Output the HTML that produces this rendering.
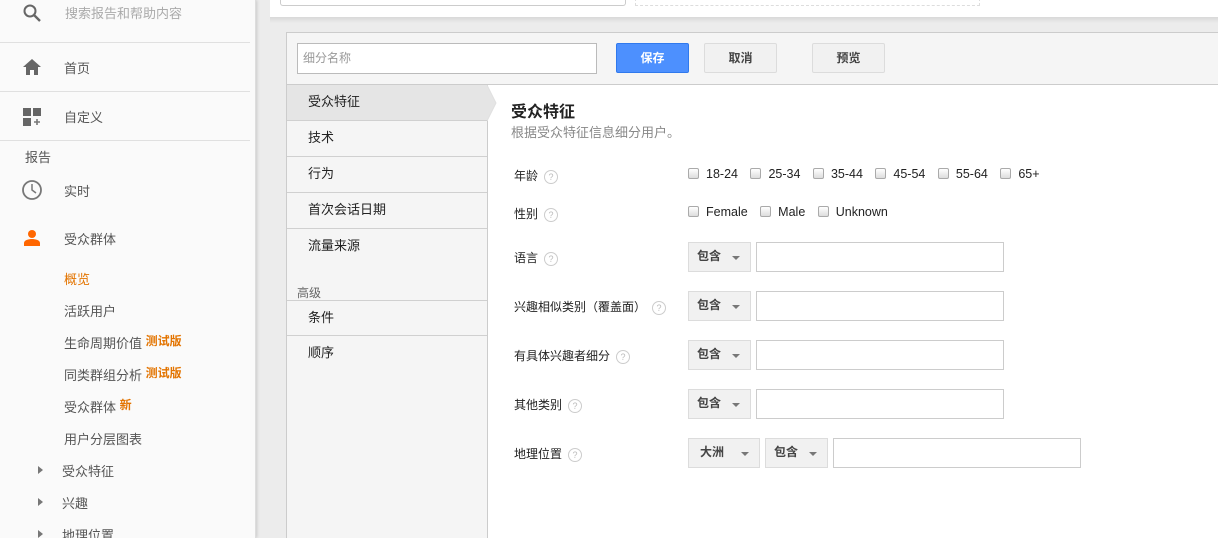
<!DOCTYPE html>
<html style="overflow:hidden;width:1218px;height:538px"><head><meta charset="utf-8"><style>
*{box-sizing:border-box;margin:0;padding:0}
body{width:1218px;height:538px;overflow:hidden;position:relative;background:#ececec;font-family:"Liberation Sans","Noto Sans CJK SC",sans-serif;font-size:13px;color:#222}
.a{position:absolute}
#side{left:0;top:0;width:256px;height:538px;background:#fafafa;border-right:1px solid #ddd;box-shadow:1px 0 3px rgba(0,0,0,.15)}
.sl{position:absolute;color:#555;font-size:13px}
.hr{position:absolute;left:0;width:250px;height:1px;background:#e0e0e0}
.or{color:#e37400;font-weight:bold;font-size:12px}
.tri{position:absolute;left:38px;width:0;height:0;border-left:5px solid #777;border-top:4px solid transparent;border-bottom:4px solid transparent}
#top{left:270px;top:0;width:948px;height:17px;background:#fff}
#panel{left:286px;top:32px;width:940px;height:506px;background:#fff;border:1px solid #ccc;border-bottom:none;overflow:hidden}
#hdr{left:0;top:0;width:940px;height:52px;background:#f5f5f5;border-bottom:1px solid #ccc}
.btn{position:absolute;top:10px;height:30px;border:1px solid #dcdcdc;background:#f1f1f1;font-weight:bold;font-size:12px;text-align:center;line-height:28px;color:#444;border-radius:2px}
#nav{left:0;top:52px;width:201px;height:470px;background:#f5f5f5;border-right:1px solid #ccc}
.ni{position:absolute;left:0;width:200px;height:36px;border-bottom:1px solid #d0d0d0;padding-left:21px;line-height:34px;font-size:13px;color:#222}
.lab{position:absolute;left:227px;font-size:12px;color:#222}
.q{display:inline-block;width:14px;height:14px;border:1px solid #ccc;border-radius:50%;color:#bbb;font-size:9px;text-align:center;line-height:12px;margin-left:6px;vertical-align:middle}
.cb{display:inline-block;width:11px;height:11px;border:1px solid #aaa;border-radius:2px;background:linear-gradient(#fff,#ddd);vertical-align:-1px;margin-right:7px}
.opts{position:absolute;font-size:12.5px;color:#222}
.opts span.t{margin-right:9px}
.dd{position:absolute;height:30px;border:1px solid #dcdcdc;background:#f1f1f1;font-weight:bold;font-size:12px;line-height:26px;padding-left:8px;color:#444}
.dd:after{content:"";position:absolute;right:10px;top:13px;border-left:4px solid transparent;border-right:4px solid transparent;border-top:4px solid #777}
.in{position:absolute;height:30px;border:1px solid #ccc;background:#fff}
</style></head><body>
<div id="side" class="a">
<svg class="a" style="left:22px;top:3px" width="20" height="20" viewBox="0 0 20 20"><circle cx="8" cy="8" r="5.5" fill="none" stroke="#666" stroke-width="2"/><path d="M12 12l6 6" stroke="#666" stroke-width="2.4"/></svg>
<div class="sl" style="left:65px;top:3px;color:#aaa">搜索报告和帮助内容</div>
<div class="hr" style="top:42px"></div>
<svg class="a" style="left:22px;top:58px" width="20" height="18" viewBox="0 0 20 18"><path d="M10 1L1 9h3v8h4v-5h4v5h4V9h3z" fill="#666"/></svg>
<div class="sl" style="left:64px;top:58px">首页</div>
<div class="hr" style="top:91px"></div>
<svg class="a" style="left:22px;top:107px" width="20" height="20" viewBox="0 0 20 20"><rect x="1" y="1" width="8" height="8" fill="#666"/><rect x="11" y="1" width="8" height="8" fill="#666"/><rect x="1" y="11" width="8" height="8" fill="#666"/><path d="M15 12v6M12 15h6" stroke="#777" stroke-width="1.6"/></svg>
<div class="sl" style="left:64px;top:107px">自定义</div>
<div class="hr" style="top:140px"></div>
<div class="sl" style="left:25px;top:147px">报告</div>
<svg class="a" style="left:21px;top:179px" width="22" height="22" viewBox="0 0 22 22"><circle cx="11" cy="11" r="9" fill="none" stroke="#777" stroke-width="1.8"/><path d="M11 5v6l4 3" fill="none" stroke="#777" stroke-width="1.5"/></svg>
<div class="sl" style="left:64px;top:181px">实时</div>
<svg class="a" style="left:23px;top:229px" width="18" height="18" viewBox="0 0 18 18"><circle cx="9" cy="5" r="4" fill="#f60"/><path d="M1 17v-3c0-3 5-4 8-4s8 1 8 4v3z" fill="#f60"/></svg>
<div class="sl" style="left:64px;top:229px">受众群体</div>
<div class="sl" style="left:64px;top:269px;color:#e37400">概览</div>
<div class="sl" style="left:64px;top:301px">活跃用户</div>
<div class="sl" style="left:64px;top:333px">生命周期价值 <span class="or" style="position:relative;top:-3px">测试版</span></div>
<div class="sl" style="left:64px;top:365px">同类群组分析 <span class="or" style="position:relative;top:-3px">测试版</span></div>
<div class="sl" style="left:64px;top:397px">受众群体 <span class="or" style="position:relative;top:-3px">新</span></div>
<div class="sl" style="left:64px;top:429px">用户分层图表</div>
<div class="tri" style="top:466px"></div><div class="sl" style="left:62px;top:461px">受众特征</div>
<div class="tri" style="top:498px"></div><div class="sl" style="left:62px;top:493px">兴趣</div>
<div class="tri" style="top:530px"></div><div class="sl" style="left:62px;top:525px">地理位置</div>
</div>
<div id="top" class="a">
<div class="a" style="left:10px;top:-2px;width:346px;height:8px;border:1px solid #ccc;border-top:none;border-radius:0 0 3px 3px"></div>
<div class="a" style="left:365px;top:-2px;width:345px;height:8px;border:1px dashed #ddd;border-top:none"></div>
</div>
<div class="a" style="left:270px;top:17px;width:948px;height:6px;background:linear-gradient(#d8d8d8,#ececec)"></div>
<div id="panel" class="a">
<div id="hdr" class="a">
<div class="a" style="left:10px;top:10px;width:300px;height:31px;border:1px solid #bbb;background:#fff;color:#999;font-size:12px;line-height:29px;padding-left:5px">细分名称</div>
<div class="btn" style="left:329px;width:73px;background:#4d90fe;border-color:#3079ed;color:#fff">保存</div>
<div class="btn" style="left:417px;width:73px">取消</div>
<div class="btn" style="left:525px;width:73px">预览</div>
</div>
<div id="nav" class="a">
<div class="ni" style="top:0;background:#e5e5e5">受众特征</div>
<div class="ni" style="top:36px">技术</div>
<div class="ni" style="top:72px">行为</div>
<div class="ni" style="top:108px">首次会话日期</div>
<div class="ni" style="top:144px;border-bottom:none">流量来源</div>
<div class="a" style="left:10px;top:199px;color:#666;font-size:12px">高级</div>
<div class="ni" style="top:215px;border-top:1px solid #d0d0d0">条件</div>
<div class="ni" style="top:251px;border-bottom:none">顺序</div>
</div>
<svg class="a" style="left:200px;top:52px" width="10" height="36"><path d="M0 0L9 18L0 36" fill="#e5e5e5" stroke="#e0e0e0"/></svg>
<div class="a" style="left:224px;top:65px;font-size:16px;font-weight:bold;color:#222">受众特征</div>
<div class="a" style="left:224px;top:89px;font-size:13px;color:#888">根据受众特征信息细分用户。</div>
<div class="lab" style="top:134px">年龄<span class="q">?</span></div>
<div class="opts" style="left:401px;top:134px"><span class="cb"></span><span class="t">18-24</span> <span class="cb"></span><span class="t">25-34</span> <span class="cb"></span><span class="t">35-44</span> <span class="cb"></span><span class="t">45-54</span> <span class="cb"></span><span class="t">55-64</span> <span class="cb"></span><span class="t">65+</span></div>
<div class="lab" style="top:172px">性别<span class="q">?</span></div>
<div class="opts" style="left:401px;top:172px"><span class="cb"></span><span class="t">Female</span> <span class="cb"></span><span class="t">Male</span> <span class="cb"></span><span class="t">Unknown</span></div>
<div class="lab" style="top:216px">语言<span class="q">?</span></div>
<div class="dd" style="left:401px;top:209px;width:63px">包含</div><div class="in" style="left:469px;top:209px;width:248px"></div>
<div class="lab" style="top:265px">兴趣相似类别（覆盖面）<span class="q">?</span></div>
<div class="dd" style="left:401px;top:258px;width:63px">包含</div><div class="in" style="left:469px;top:258px;width:248px"></div>
<div class="lab" style="top:314px">有具体兴趣者细分<span class="q">?</span></div>
<div class="dd" style="left:401px;top:307px;width:63px">包含</div><div class="in" style="left:469px;top:307px;width:248px"></div>
<div class="lab" style="top:363px">其他类别<span class="q">?</span></div>
<div class="dd" style="left:401px;top:356px;width:63px">包含</div><div class="in" style="left:469px;top:356px;width:248px"></div>
<div class="lab" style="top:412px">地理位置<span class="q">?</span></div>
<div class="dd" style="left:401px;top:405px;width:72px;padding-left:11px">大洲</div><div class="dd" style="left:478px;top:405px;width:63px">包含</div><div class="in" style="left:546px;top:405px;width:248px"></div>
</div>
</body></html>
